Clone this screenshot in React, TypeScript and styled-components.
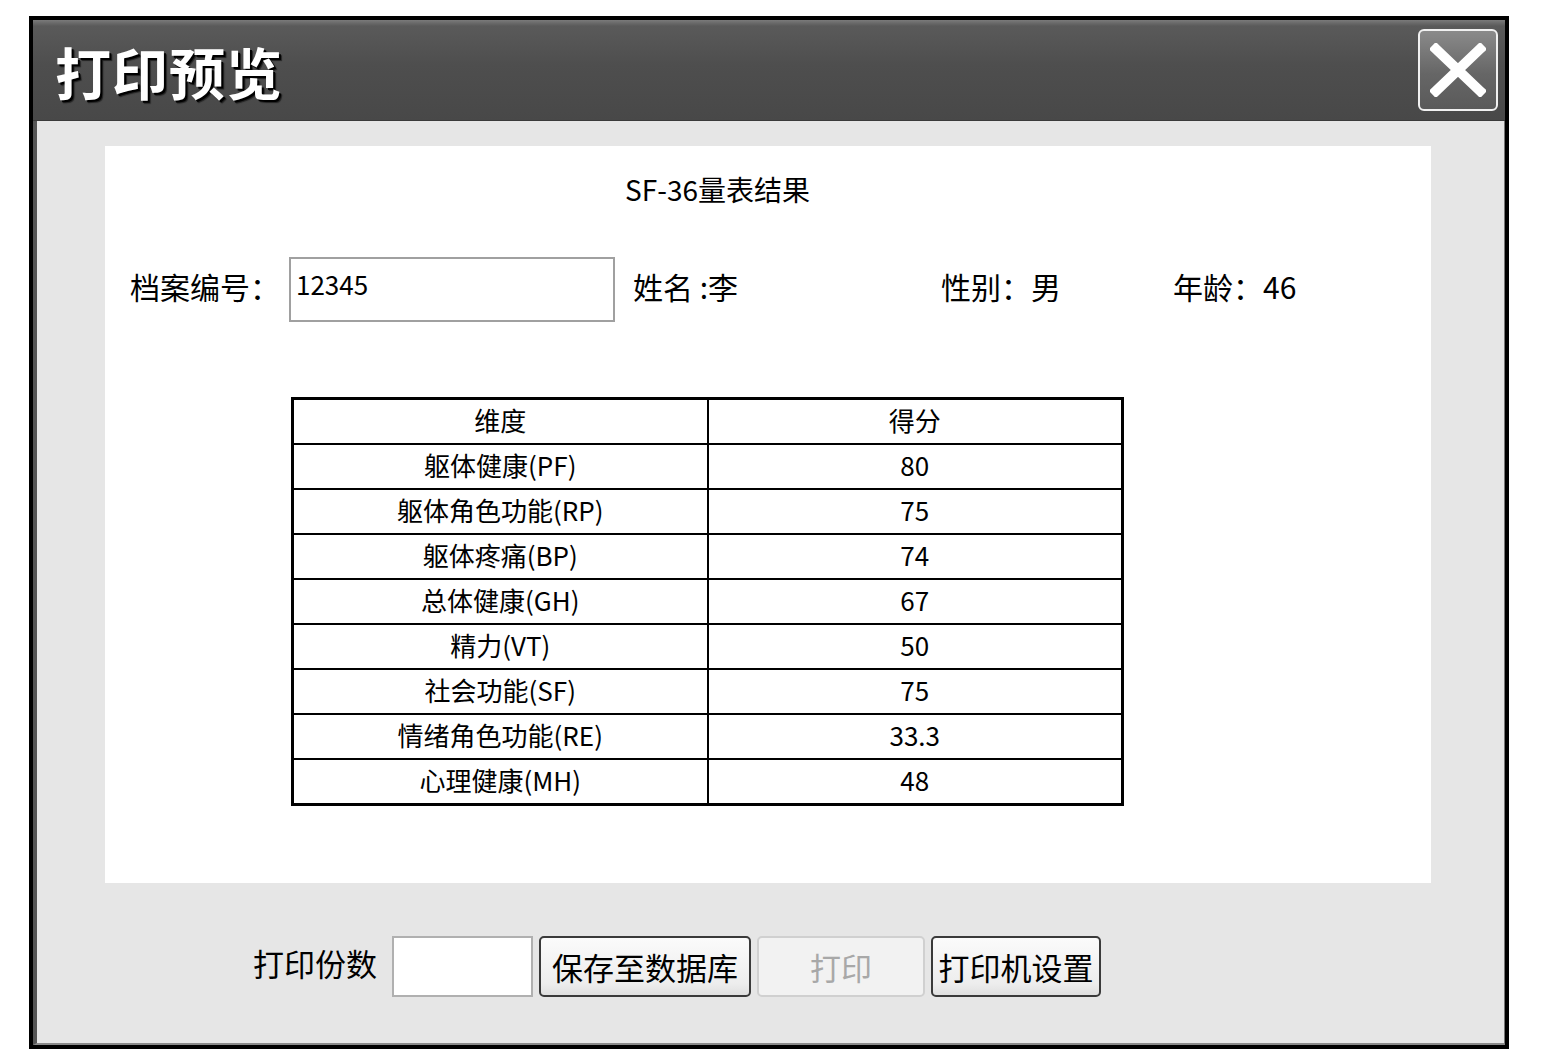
import React from 'react';
import styled, { createGlobalStyle } from 'styled-components';

const GlobalStyle = createGlobalStyle`
    html, body {
        margin: 0;
        padding: 0;
        background: #ffffff;
    }
    body {
        font-family: "Noto Sans CJK SC", "Liberation Sans", sans-serif;
        color: #000000;
    }
`

const Page = styled.div`
    width: 1550px;
    height: 1062px;
    padding: 16px 0 0 29px;
    box-sizing: border-box;
`
const Window = styled.div`
    width: 1480px;
    height: 1033px;
    border: 4px solid #000000;
    box-sizing: border-box;
    display: flex;
    flex-direction: column;
`
const TitleBar = styled.div`
    height: 100px;
    flex-shrink: 0;
    display: flex;
    align-items: center;
    justify-content: space-between;
    padding: 0 7px 0 22px;
    background: linear-gradient(#7a7a7a 0px, #5a5a5a 6px, #4e4e4e 45%, #484848 100%);
    border-bottom: 1px solid #3a3a3a;
`
const Title = styled.div`
    font-size: 56px;
    font-weight: 700;
    color: #ffffff;
    letter-spacing: 1px;
    text-shadow: 2px 2px 0 #000000, 3px 3px 1px #222222;
    line-height: 1;
    margin-top: 2px;
`
const CloseButton = styled.div`
    width: 80px;
    height: 82px;
    box-sizing: border-box;
    border: 2px solid #f0f0f0;
    border-radius: 6px;
    background: linear-gradient(#8a8a8a, #666666 55%, #5a5a5a);
    display: flex;
    align-items: center;
    justify-content: center;
`
const Body = styled.div`
    flex: 1;
    background: #e6e6e6;
    border-left: 4px solid #555555;
    border-right: 1px solid #777777;
    border-bottom: 2px solid #8a8a8a;
    padding: 25px 73px 0 68px;
    display: flex;
    flex-direction: column;
`
const Sheet = styled.div`
    background: #ffffff;
    height: 737px;
    box-sizing: border-box;
    padding: 26px 0 0 25px;
    display: flex;
    flex-direction: column;
`
const SheetTitle = styled.div`
    font-size: 28px;
    line-height: 34px;
    text-align: center;
    padding-right: 126px;
`
const InfoRow = styled.div`
    display: flex;
    align-items: center;
    margin-top: 51px;
    font-size: 30px;
`
const Label = styled.span`
    white-space: nowrap;
    padding-bottom: 8px;
`
const Field = styled.span<{ $w: number }>`
    width: ${p => p.$w}px;
    flex-shrink: 0;
    white-space: nowrap;
    padding-bottom: 8px;
`
const IdInput = styled.input`
    width: 326px;
    height: 65px;
    box-sizing: border-box;
    margin: 0 18px 0 9px;
    border: 2px solid #a0a0a0;
    padding: 0 5px 12px;
    font-family: "Noto Sans CJK SC", "Liberation Sans", sans-serif;
    font-size: 26px;
    color: #000000;
    background: #ffffff;
    outline: none;
`
const Table = styled.table`
    margin: 75px 0 0 161px;
    width: 833px;
    border-collapse: collapse;
    border: 3px solid #000000;
    font-size: 26px;
`
const Cell = styled.td`
    border: 2px solid #000000;
    height: 39px;
    padding: 0 0 4px;
    width: 50%;
    text-align: center;
    line-height: 32px;
`
const Footer = styled.div`
    display: flex;
    align-items: center;
    margin-top: 53px;
    padding-left: 148px;
    font-size: 31px;
`
const CopiesInput = styled.input`
    width: 141px;
    height: 61px;
    box-sizing: border-box;
    margin: 0 6px 0 15px;
    border: 2px solid #b0b0b0;
    background: #ffffff;
    outline: none;
`
const Button = styled.button<{ $w: number }>`
    width: ${p => p.$w}px;
    height: 61px;
    margin-right: 6px;
    padding: 0;
    border: 2px solid #3a3a3a;
    border-radius: 5px;
    background: linear-gradient(#fbfbfb, #ededed 80%, #e0e0e0);
    font-family: "Noto Sans CJK SC", "Liberation Sans", sans-serif;
    font-size: 31px;
    color: #000000;
    line-height: 1;
    &:disabled {
        border-color: #d0d0d0;
        background: #f2f2f2;
        color: #a8a8a8;
    }
`

const rows: [string, string][] = [
    ['躯体健康(PF)', '80'],
    ['躯体角色功能(RP)', '75'],
    ['躯体疼痛(BP)', '74'],
    ['总体健康(GH)', '67'],
    ['精力(VT)', '50'],
    ['社会功能(SF)', '75'],
    ['情绪角色功能(RE)', '33.3'],
    ['心理健康(MH)', '48'],
]

export default function App() {
    return (
        <Page>
            <GlobalStyle />
            <Window>
                <TitleBar>
                    <Title>{'打印预览'}</Title>
                    <CloseButton>
                        <svg width="56" height="54" viewBox="0 0 56 54">
                            <path d="M6 6 L50 48 M50 6 L6 48" stroke="#ffffff" strokeWidth="10" strokeLinecap="square" />
                        </svg>
                    </CloseButton>
                </TitleBar>
                <Body>
                    <Sheet>
                        <SheetTitle>{'SF-36量表结果'}</SheetTitle>
                        <InfoRow>
                            <Label>{'档案编号：'}</Label>
                            <IdInput readOnly value="12345" />
                            <Field $w={308}>{'姓名 :李'}</Field>
                            <Field $w={232}>{'性别：男'}</Field>
                            <Field $w={200}>{'年龄：46'}</Field>
                        </InfoRow>
                        <Table>
                            <tbody>
                                <tr>
                                    <Cell>{'维度'}</Cell>
                                    <Cell>{'得分'}</Cell>
                                </tr>
                                {rows.map(([name, score]) => (
                                    <tr key={name}>
                                        <Cell>{name}</Cell>
                                        <Cell>{score}</Cell>
                                    </tr>
                                ))}
                            </tbody>
                        </Table>
                    </Sheet>
                    <Footer>
                        <Label>{'打印份数'}</Label>
                        <CopiesInput />
                        <Button $w={212}>{'保存至数据库'}</Button>
                        <Button $w={168} disabled>{'打印'}</Button>
                        <Button $w={170}>{'打印机设置'}</Button>
                    </Footer>
                </Body>
            </Window>
        </Page>
    );
}
